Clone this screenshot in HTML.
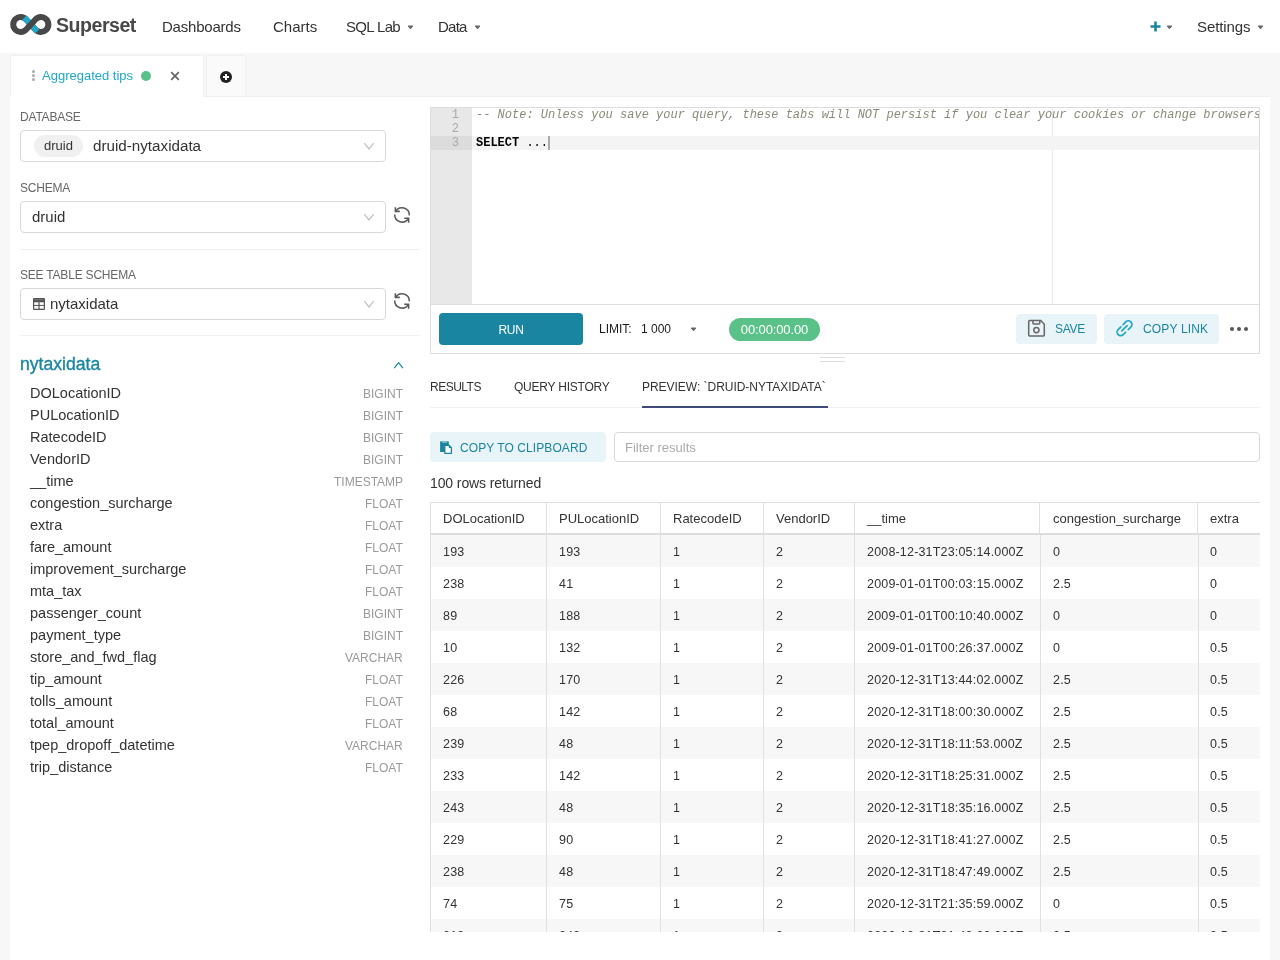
<!DOCTYPE html>
<html><head><meta charset="utf-8">
<style>
*{box-sizing:border-box;margin:0;padding:0}
html,body{width:1280px;height:960px;overflow:hidden;-webkit-font-smoothing:antialiased;background:#f7f7f7;font-family:"Liberation Sans",sans-serif;color:#333}
.a{position:absolute;white-space:nowrap}
#nav{position:absolute;left:0;top:0;width:1280px;height:53px;background:#fff}
.nav{font-size:15px;color:#323232;top:18px}
.caret{position:absolute;width:0;height:0;border-left:3.5px solid transparent;border-right:3.5px solid transparent;border-top:4px solid #666}
#main{position:absolute;left:10px;top:97px;width:1260px;height:863px;background:#fff}
.lbl{font-size:12px;color:#666;letter-spacing:-0.2px}
.sel{position:absolute;left:20px;width:366px;height:32px;border:1px solid #d9d9d9;border-radius:4px;background:#fff}
.chev{position:absolute;width:8px;height:8px;border-right:1px solid #bbb;border-bottom:1px solid #bbb;transform:rotate(45deg)}
.col{font-size:14.5px;color:#333;left:30px}
.typ{font-size:12px;color:#999;right:877px;text-align:right}
.th{position:absolute;font-size:13px;color:#333;white-space:nowrap}
.td{position:absolute;font-size:12.5px;letter-spacing:0.18px;color:#333;white-space:nowrap;margin-top:1px}
body>*{will-change:transform}
</style></head><body>
<div id="nav">
  <svg class="a" style="left:10px;top:14px" width="44" height="22" viewBox="10 14 44 22">
    <path d="M26.19,29.53 L35.41,19.47 A7.45,7.45 0 1 1 35.41,29.53 L26.19,19.47 A7.45,7.45 0 1 0 26.19,29.53 Z" fill="none" stroke="#484848" stroke-width="6"/>
    <line x1="24.5" y1="17.6" x2="37.1" y2="31.4" stroke="#20A7C9" stroke-width="6"/>
    <line x1="28.2" y1="27.3" x2="33.4" y2="21.7" stroke="#484848" stroke-width="6"/>
  </svg>
  <div class="a" style="left:56px;top:14px;font-size:19.6px;letter-spacing:-0.5px;font-weight:bold;color:#484848">Superset</div>
  <div class="a nav" style="left:162px;letter-spacing:-0.22px">Dashboards</div>
  <div class="a nav" style="left:273px">Charts</div>
  <div class="a nav" style="left:346px;letter-spacing:-0.66px">SQL Lab</div>
  <svg class="a" style="left:406.5px;top:24.5px" width="7" height="5" viewBox="0 0 7 5"><path d="M1.2,1 H5.8 L3.5,3.8 Z" fill="#666" stroke="#666" stroke-width="1" stroke-linejoin="round"/></svg>
  <div class="a nav" style="left:438px;letter-spacing:-0.75px">Data</div>
  <svg class="a" style="left:473.7px;top:24.5px" width="7" height="5" viewBox="0 0 7 5"><path d="M1.2,1 H5.8 L3.5,3.8 Z" fill="#666" stroke="#666" stroke-width="1" stroke-linejoin="round"/></svg>
  <svg class="a" style="left:1150px;top:21px" width="11" height="11" viewBox="0 0 11 11"><path d="M5.5,0.5 V10.5 M0.5,5.5 H10.5" stroke="#1A85A0" stroke-width="2.6"/></svg>
  <svg class="a" style="left:1165.5px;top:24.5px" width="7" height="5" viewBox="0 0 7 5"><path d="M1.2,1 H5.8 L3.5,3.8 Z" fill="#666" stroke="#666" stroke-width="1" stroke-linejoin="round"/></svg>
  <div class="a nav" style="left:1197px;letter-spacing:-0.11px">Settings</div>
  <svg class="a" style="left:1256.7px;top:24.5px" width="7" height="5" viewBox="0 0 7 5"><path d="M1.2,1 H5.8 L3.5,3.8 Z" fill="#666" stroke="#666" stroke-width="1" stroke-linejoin="round"/></svg>
</div>

<!-- tabs -->
<div class="a" style="left:10px;top:55px;width:194px;height:42px;background:#fff;border:1px solid #f0f0f0;border-bottom:none;border-radius:2px 2px 0 0"></div>
<div class="a" style="left:206px;top:55px;width:40px;height:42px;background:#fafafa;border:1px solid #f0f0f0;border-radius:2px 2px 0 0"></div>

<div id="main"></div>
<div class="a" style="left:204px;top:96px;width:1066px;height:1px;background:#efefef"></div>


<!-- tab content -->
<div class="a" style="left:32px;top:70px;width:3px;height:13px">
  <div style="position:absolute;left:0;top:0;width:3px;height:3px;border-radius:50%;background:#aaa"></div>
  <div style="position:absolute;left:0;top:4px;width:3px;height:3px;border-radius:50%;background:#aaa"></div>
  <div style="position:absolute;left:0;top:8px;width:3px;height:3px;border-radius:50%;background:#aaa"></div>
</div>
<div class="a" style="left:42px;top:68px;font-size:13px;color:#20A7C9">Aggregated tips</div>
<div class="a" style="left:141px;top:71px;width:10px;height:10px;border-radius:50%;background:#5AC189"></div>
<svg class="a" style="left:170px;top:71px" width="10" height="10" viewBox="0 0 10 10"><path d="M1.2,1.2 L8.8,8.8 M8.8,1.2 L1.2,8.8" stroke="#666" stroke-width="1.7"/></svg>
<svg class="a" style="left:220px;top:71px" width="12" height="12" viewBox="0 0 12 12"><circle cx="6" cy="6" r="6" fill="#222"/><path d="M6,3 V9 M3,6 H9" stroke="#fff" stroke-width="2"/></svg>

<!-- left panel -->
<div class="a lbl" style="left:20px;top:110px">DATABASE</div>
<div class="sel" style="top:130px"></div>
<div class="a" style="left:34px;top:135px;width:49px;height:22px;border-radius:11px;background:#f0f0f0"></div>
<div class="a" style="left:44px;top:138px;font-size:13px;color:#333">druid</div>
<div class="a" style="left:93px;top:137px;font-size:15.2px;color:#333">druid-nytaxidata</div>
<svg class="a" style="left:362px;top:140px" width="14" height="12" viewBox="0 0 14 12"><path d="M2.3,3.2 L7,9 L11.7,3.2" fill="none" stroke="#bfbfbf" stroke-width="1.2"/></svg>

<div class="a lbl" style="left:20px;top:181px">SCHEMA</div>
<div class="sel" style="top:201px"></div>
<div class="a" style="left:32px;top:208px;font-size:15px;color:#333">druid</div>
<svg class="a" style="left:362px;top:211px" width="14" height="12" viewBox="0 0 14 12"><path d="M2.3,3.2 L7,9 L11.7,3.2" fill="none" stroke="#bfbfbf" stroke-width="1.2"/></svg>
<svg class="a" style="left:388px;top:202px" width="30" height="30" viewBox="0 0 30 30"><path d="M7.6,9.6 A7.3,7.3 0 0 1 21.3,13.4 M6.7,12.6 A7.3,7.3 0 0 0 20.2,16.6" fill="none" stroke="#595959" stroke-width="1.6"/><path d="M7.4,5.2 V9.4 H11.8 M16.2,16.3 H20.6 V20.7" fill="none" stroke="#595959" stroke-width="1.6"/></svg>
<div class="a" style="left:20px;top:249px;width:400px;height:1px;background:#f0f0f0"></div>

<div class="a lbl" style="left:20px;top:268px">SEE TABLE SCHEMA</div>
<div class="sel" style="top:288px"></div>
<svg class="a" style="left:33px;top:298px" width="12" height="12" viewBox="0 0 12 12"><rect x="0" y="0" width="12" height="12" rx="1" fill="#555"/><rect x="1.2" y="4.3" width="4.2" height="2.6" fill="#fff"/><rect x="6.6" y="4.3" width="4.2" height="2.6" fill="#fff"/><rect x="1.2" y="7.9" width="4.2" height="2.8" fill="#fff"/><rect x="6.6" y="7.9" width="4.2" height="2.8" fill="#fff"/><rect x="1.2" y="1.2" width="9.6" height="1" fill="#777"/></svg>
<div class="a" style="left:50px;top:295px;font-size:15px;color:#333">nytaxidata</div>
<svg class="a" style="left:362px;top:298px" width="14" height="12" viewBox="0 0 14 12"><path d="M2.3,3.2 L7,9 L11.7,3.2" fill="none" stroke="#bfbfbf" stroke-width="1.2"/></svg>
<svg class="a" style="left:388px;top:288px" width="30" height="30" viewBox="0 0 30 30"><path d="M7.6,9.6 A7.3,7.3 0 0 1 21.3,13.4 M6.7,12.6 A7.3,7.3 0 0 0 20.2,16.6" fill="none" stroke="#595959" stroke-width="1.6"/><path d="M7.4,5.2 V9.4 H11.8 M16.2,16.3 H20.6 V20.7" fill="none" stroke="#595959" stroke-width="1.6"/></svg>
<div class="a" style="left:20px;top:335px;width:400px;height:1px;background:#f0f0f0"></div>

<div class="a" style="left:20px;top:353.5px;font-size:17.6px;color:#1A85A0;-webkit-text-stroke:0.35px #1A85A0">nytaxidata</div>
<svg class="a" style="left:392px;top:360px" width="14" height="11" viewBox="0 0 14 11"><path d="M2.25,8.1 L6.6,2.7 L11,8.1" fill="none" stroke="#1A85A0" stroke-width="1.2"/></svg>
<div class="a col" style="top:385px">DOLocationID</div><div class="a typ" style="top:387px">BIGINT</div>
<div class="a col" style="top:407px">PULocationID</div><div class="a typ" style="top:409px">BIGINT</div>
<div class="a col" style="top:429px">RatecodeID</div><div class="a typ" style="top:431px">BIGINT</div>
<div class="a col" style="top:451px">VendorID</div><div class="a typ" style="top:453px">BIGINT</div>
<div class="a col" style="top:473px">__time</div><div class="a typ" style="top:475px">TIMESTAMP</div>
<div class="a col" style="top:495px">congestion_surcharge</div><div class="a typ" style="top:497px">FLOAT</div>
<div class="a col" style="top:517px">extra</div><div class="a typ" style="top:519px">FLOAT</div>
<div class="a col" style="top:539px">fare_amount</div><div class="a typ" style="top:541px">FLOAT</div>
<div class="a col" style="top:561px">improvement_surcharge</div><div class="a typ" style="top:563px">FLOAT</div>
<div class="a col" style="top:583px">mta_tax</div><div class="a typ" style="top:585px">FLOAT</div>
<div class="a col" style="top:605px">passenger_count</div><div class="a typ" style="top:607px">BIGINT</div>
<div class="a col" style="top:627px">payment_type</div><div class="a typ" style="top:629px">BIGINT</div>
<div class="a col" style="top:649px">store_and_fwd_flag</div><div class="a typ" style="top:651px">VARCHAR</div>
<div class="a col" style="top:671px">tip_amount</div><div class="a typ" style="top:673px">FLOAT</div>
<div class="a col" style="top:693px">tolls_amount</div><div class="a typ" style="top:695px">FLOAT</div>
<div class="a col" style="top:715px">total_amount</div><div class="a typ" style="top:717px">FLOAT</div>
<div class="a col" style="top:737px">tpep_dropoff_datetime</div><div class="a typ" style="top:739px">VARCHAR</div>
<div class="a col" style="top:759px">trip_distance</div><div class="a typ" style="top:761px">FLOAT</div>

<!-- editor -->
<div class="a" style="left:430px;top:107px;width:830px;height:198px;border:1px solid #ddd;background:#fff;overflow:hidden">
  <div style="position:absolute;left:0;top:0;width:41px;height:196px;background:#e8e8e8"></div>
  <div style="position:absolute;left:0;top:28px;width:41px;height:14px;background:#dcdcdc"></div>
<div style="position:absolute;left:621px;top:0;width:1px;height:196px;background:#e8e8e8"></div>
  <div style="position:absolute;left:41px;top:28px;width:788px;height:14px;background:#f4f4f4"></div>
    <div style="position:absolute;left:0;top:0;width:28px;font:12px/14px 'Liberation Mono',monospace;color:#aaa;text-align:right">1<br>2<br>3</div>
  <div style="position:absolute;left:45px;top:0;font:italic 12px/14px 'Liberation Mono',monospace;color:#8a8a7a;white-space:pre">-- Note: Unless you save your query, these tabs will NOT persist if you clear your cookies or change browsers</div>
  <div style="position:absolute;left:45px;top:28px;font:12px/14px 'Liberation Mono',monospace;color:#000;white-space:pre"><b>SELECT</b> ...</div>
  <div style="position:absolute;left:117px;top:28px;width:2px;height:14px;background:#aaa"></div>
</div>
<!-- toolbar -->
<div class="a" style="left:430px;top:304px;width:830px;height:50px;border:1px solid #ddd;background:#fff"></div>
<div class="a" style="left:439px;top:313px;width:144px;height:32px;border-radius:4px;background:#1A85A0;color:#fff;font-size:14px;text-align:center;line-height:34px;font-size:12px;letter-spacing:-0.4px">RUN</div>
<div class="a" style="left:599px;top:322px;font-size:12px;color:#1b1b1b">LIMIT:</div>
<div class="a" style="left:641px;top:322px;font-size:12px;color:#1b1b1b">1 000</div>
<svg class="a" style="left:689.5px;top:326.5px" width="7" height="5" viewBox="0 0 7 5"><path d="M1.2,1 H5.8 L3.5,3.8 Z" fill="#666" stroke="#666" stroke-width="1" stroke-linejoin="round"/></svg>
<div class="a" style="left:729px;top:318px;width:91px;height:23px;border-radius:12px;background:#5AC189;color:#fff;font-size:13px;letter-spacing:-0.12px;text-align:center;line-height:23px">00:00:00.00</div>
<div class="a" style="left:1016px;top:314px;width:81px;height:30px;border-radius:4px;background:#E8F4F8"></div>
<svg class="a" style="left:1022px;top:314px" width="30" height="30" viewBox="0 0 30 30"><path d="M6.7,7.6 Q6.7,6.6 7.7,6.6 H18.75 L22.3,10.3 V21 Q22.3,22 21.3,22 H7.7 Q6.7,22 6.7,21 Z" fill="none" stroke="#666" stroke-width="1.5"/><path d="M10.9,6.6 V9 Q10.9,10 11.9,10 H16.8 Q17.8,10 17.8,9 V6.6" fill="none" stroke="#666" stroke-width="1.5"/><circle cx="14.4" cy="16.1" r="2.6" fill="none" stroke="#666" stroke-width="1.5"/></svg>
<div class="a" style="left:1055px;top:322px;font-size:12px;letter-spacing:-0.25px;color:#1A85A0">SAVE</div>
<div class="a" style="left:1104px;top:314px;width:115px;height:30px;border-radius:4px;background:#E8F4F8"></div>
<svg class="a" style="left:1110px;top:314px" width="30" height="30" viewBox="0 0 30 30"><path d="M13.1,10.6 L15.75,7.95 A3.6,3.6 0 0 1 20.85,13.05 L18.3,15.6 M10.9,12.8 L8.1,15.55 A3.6,3.6 0 0 0 13.2,20.65 L15.6,18.25 M11.8,16.8 L17.1,11.6" fill="none" stroke="#20A7C9" stroke-width="1.7" stroke-linecap="round"/></svg>
<div class="a" style="left:1143px;top:322px;font-size:12px;letter-spacing:0.16px;color:#1A85A0">COPY LINK</div>
<div class="a" style="left:1230px;top:327px;width:4px;height:4px;border-radius:50%;background:#555"></div>
<div class="a" style="left:1237px;top:327px;width:4px;height:4px;border-radius:50%;background:#555"></div>
<div class="a" style="left:1244px;top:327px;width:4px;height:4px;border-radius:50%;background:#555"></div>
<div class="a" style="left:820px;top:357px;width:25px;height:1px;background:#ddd"></div>
<div class="a" style="left:820px;top:361px;width:25px;height:1px;background:#ddd"></div>

<!-- result tabs -->
<div class="a" style="left:430px;top:407px;width:830px;height:1px;background:#f0f0f0"></div>
<div class="a" style="left:430px;top:380px;font-size:12px;letter-spacing:-0.5px;color:#333">RESULTS</div>
<div class="a" style="left:514px;top:380px;font-size:12px;letter-spacing:-0.23px;color:#333">QUERY HISTORY</div>
<div class="a" style="left:642px;top:380px;font-size:12px;letter-spacing:-0.03px;color:#333">PREVIEW: `DRUID-NYTAXIDATA`</div>
<div class="a" style="left:642px;top:406px;width:186px;height:2px;background:#3D4A7A"></div>

<div class="a" style="left:430px;top:432px;width:176px;height:30px;border-radius:4px;background:#E8F4F8"></div>
<svg class="a" style="left:434px;top:432px" width="30" height="30" viewBox="0 0 30 30"><rect x="6.1" y="9.4" width="8.7" height="10.6" fill="#1A85A0"/><rect x="8.2" y="9.4" width="4.6" height="1.6" fill="#7fb9c9"/><path d="M10.8,13.3 H15 L17.4,15.7 V21.3 H10.8 Z" fill="#fff" stroke="#1A85A0" stroke-width="1.3" stroke-linejoin="round"/><path d="M14.8,13.3 V16 H17.4 Z" fill="#1A85A0"/></svg>
<div class="a" style="left:460px;top:441px;font-size:12px;letter-spacing:0.08px;color:#1A85A0">COPY TO CLIPBOARD</div>
<div class="a" style="left:614px;top:432px;width:646px;height:30px;border-radius:4px;border:1px solid #d9d9d9"></div>
<div class="a" style="left:625px;top:440px;font-size:13px;color:#aaa">Filter results</div>
<div class="a" style="left:430px;top:475px;font-size:14px;letter-spacing:-0.1px;color:#333">100 rows returned</div>
<div class="a" style="left:430px;top:502px;width:830px;height:430px;overflow:hidden">
<div style="position:absolute;left:0;top:33px;width:830px;height:32px;background:#f7f7f7"></div>
<div style="position:absolute;left:0;top:97px;width:830px;height:32px;background:#f7f7f7"></div>
<div style="position:absolute;left:0;top:161px;width:830px;height:32px;background:#f7f7f7"></div>
<div style="position:absolute;left:0;top:225px;width:830px;height:32px;background:#f7f7f7"></div>
<div style="position:absolute;left:0;top:289px;width:830px;height:32px;background:#f7f7f7"></div>
<div style="position:absolute;left:0;top:353px;width:830px;height:32px;background:#f7f7f7"></div>
<div style="position:absolute;left:0;top:417px;width:830px;height:32px;background:#f7f7f7"></div>
<div style="position:absolute;left:0;top:0;width:830px;height:1px;background:#e0e0e0"></div>
<div style="position:absolute;left:0;top:31px;width:830px;height:2px;background:#dcdcdc"></div>
<div style="position:absolute;left:0px;top:0;width:1px;height:430px;background:#e0e0e0"></div>
<div style="position:absolute;left:116px;top:0;width:1px;height:430px;background:#e0e0e0"></div>
<div style="position:absolute;left:230px;top:0;width:1px;height:430px;background:#e0e0e0"></div>
<div style="position:absolute;left:333px;top:0;width:1px;height:430px;background:#e0e0e0"></div>
<div style="position:absolute;left:424px;top:0;width:1px;height:430px;background:#e0e0e0"></div>
<div style="position:absolute;left:609px;top:0;width:1px;height:33px;background:#e0e0e0"></div><div style="position:absolute;left:610px;top:33px;width:1px;height:397px;background:#e0e0e0"></div>
<div style="position:absolute;left:767px;top:0;width:1px;height:33px;background:#e0e0e0"></div><div style="position:absolute;left:768px;top:33px;width:1px;height:397px;background:#e0e0e0"></div>
<div class="th" style="left:13px;top:9px">DOLocationID</div>
<div class="th" style="left:129px;top:9px">PULocationID</div>
<div class="th" style="left:243px;top:9px">RatecodeID</div>
<div class="th" style="left:346px;top:9px">VendorID</div>
<div class="th" style="left:437px;top:9px">__time</div>
<div class="th" style="left:623px;top:9px">congestion_surcharge</div>
<div class="th" style="left:780px;top:9px">extra</div>
<div class="td" style="left:13px;top:42px">193</div>
<div class="td" style="left:129px;top:42px">193</div>
<div class="td" style="left:243px;top:42px">1</div>
<div class="td" style="left:346px;top:42px">2</div>
<div class="td" style="left:437px;top:42px">2008-12-31T23:05:14.000Z</div>
<div class="td" style="left:623px;top:42px">0</div>
<div class="td" style="left:780px;top:42px">0</div>
<div class="td" style="left:13px;top:74px">238</div>
<div class="td" style="left:129px;top:74px">41</div>
<div class="td" style="left:243px;top:74px">1</div>
<div class="td" style="left:346px;top:74px">2</div>
<div class="td" style="left:437px;top:74px">2009-01-01T00:03:15.000Z</div>
<div class="td" style="left:623px;top:74px">2.5</div>
<div class="td" style="left:780px;top:74px">0</div>
<div class="td" style="left:13px;top:106px">89</div>
<div class="td" style="left:129px;top:106px">188</div>
<div class="td" style="left:243px;top:106px">1</div>
<div class="td" style="left:346px;top:106px">2</div>
<div class="td" style="left:437px;top:106px">2009-01-01T00:10:40.000Z</div>
<div class="td" style="left:623px;top:106px">0</div>
<div class="td" style="left:780px;top:106px">0</div>
<div class="td" style="left:13px;top:138px">10</div>
<div class="td" style="left:129px;top:138px">132</div>
<div class="td" style="left:243px;top:138px">1</div>
<div class="td" style="left:346px;top:138px">2</div>
<div class="td" style="left:437px;top:138px">2009-01-01T00:26:37.000Z</div>
<div class="td" style="left:623px;top:138px">0</div>
<div class="td" style="left:780px;top:138px">0.5</div>
<div class="td" style="left:13px;top:170px">226</div>
<div class="td" style="left:129px;top:170px">170</div>
<div class="td" style="left:243px;top:170px">1</div>
<div class="td" style="left:346px;top:170px">2</div>
<div class="td" style="left:437px;top:170px">2020-12-31T13:44:02.000Z</div>
<div class="td" style="left:623px;top:170px">2.5</div>
<div class="td" style="left:780px;top:170px">0.5</div>
<div class="td" style="left:13px;top:202px">68</div>
<div class="td" style="left:129px;top:202px">142</div>
<div class="td" style="left:243px;top:202px">1</div>
<div class="td" style="left:346px;top:202px">2</div>
<div class="td" style="left:437px;top:202px">2020-12-31T18:00:30.000Z</div>
<div class="td" style="left:623px;top:202px">2.5</div>
<div class="td" style="left:780px;top:202px">0.5</div>
<div class="td" style="left:13px;top:234px">239</div>
<div class="td" style="left:129px;top:234px">48</div>
<div class="td" style="left:243px;top:234px">1</div>
<div class="td" style="left:346px;top:234px">2</div>
<div class="td" style="left:437px;top:234px">2020-12-31T18:11:53.000Z</div>
<div class="td" style="left:623px;top:234px">2.5</div>
<div class="td" style="left:780px;top:234px">0.5</div>
<div class="td" style="left:13px;top:266px">233</div>
<div class="td" style="left:129px;top:266px">142</div>
<div class="td" style="left:243px;top:266px">1</div>
<div class="td" style="left:346px;top:266px">2</div>
<div class="td" style="left:437px;top:266px">2020-12-31T18:25:31.000Z</div>
<div class="td" style="left:623px;top:266px">2.5</div>
<div class="td" style="left:780px;top:266px">0.5</div>
<div class="td" style="left:13px;top:298px">243</div>
<div class="td" style="left:129px;top:298px">48</div>
<div class="td" style="left:243px;top:298px">1</div>
<div class="td" style="left:346px;top:298px">2</div>
<div class="td" style="left:437px;top:298px">2020-12-31T18:35:16.000Z</div>
<div class="td" style="left:623px;top:298px">2.5</div>
<div class="td" style="left:780px;top:298px">0.5</div>
<div class="td" style="left:13px;top:330px">229</div>
<div class="td" style="left:129px;top:330px">90</div>
<div class="td" style="left:243px;top:330px">1</div>
<div class="td" style="left:346px;top:330px">2</div>
<div class="td" style="left:437px;top:330px">2020-12-31T18:41:27.000Z</div>
<div class="td" style="left:623px;top:330px">2.5</div>
<div class="td" style="left:780px;top:330px">0.5</div>
<div class="td" style="left:13px;top:362px">238</div>
<div class="td" style="left:129px;top:362px">48</div>
<div class="td" style="left:243px;top:362px">1</div>
<div class="td" style="left:346px;top:362px">2</div>
<div class="td" style="left:437px;top:362px">2020-12-31T18:47:49.000Z</div>
<div class="td" style="left:623px;top:362px">2.5</div>
<div class="td" style="left:780px;top:362px">0.5</div>
<div class="td" style="left:13px;top:394px">74</div>
<div class="td" style="left:129px;top:394px">75</div>
<div class="td" style="left:243px;top:394px">1</div>
<div class="td" style="left:346px;top:394px">2</div>
<div class="td" style="left:437px;top:394px">2020-12-31T21:35:59.000Z</div>
<div class="td" style="left:623px;top:394px">0</div>
<div class="td" style="left:780px;top:394px">0.5</div>
<div class="td" style="left:13px;top:426px">213</div>
<div class="td" style="left:129px;top:426px">243</div>
<div class="td" style="left:243px;top:426px">1</div>
<div class="td" style="left:346px;top:426px">2</div>
<div class="td" style="left:437px;top:426px">2020-12-31T21:40:20.000Z</div>
<div class="td" style="left:623px;top:426px">2.5</div>
<div class="td" style="left:780px;top:426px">0.5</div>
</div>
</body></html>
